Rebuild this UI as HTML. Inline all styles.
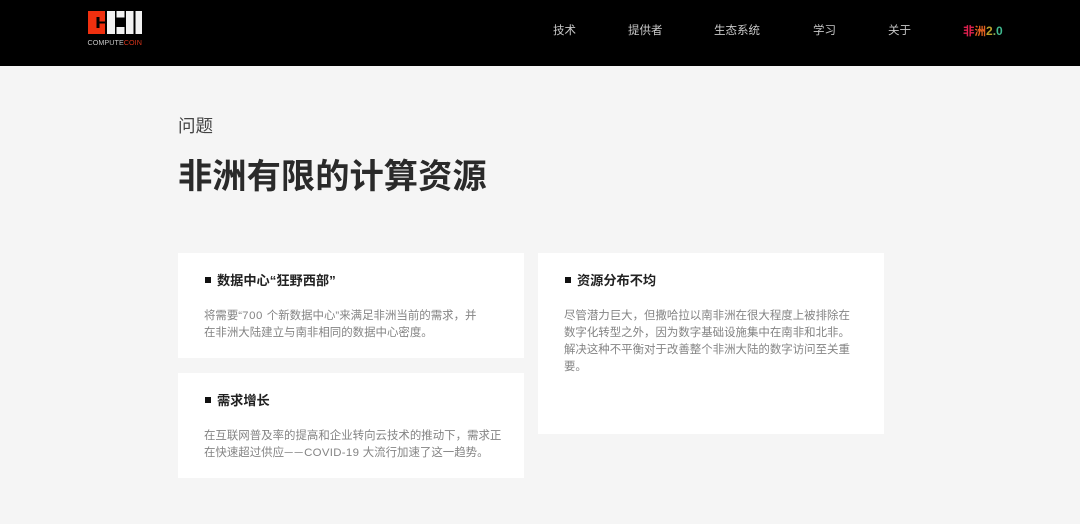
<!DOCTYPE html>
<html lang="zh-CN"><head><meta charset="utf-8"><style>
html,body{margin:0;padding:0}
body{width:1080px;height:524px;position:relative;overflow:hidden;background:#f5f5f5;font-family:"Liberation Sans","Noto Sans CJK SC",sans-serif}
.a{position:absolute;white-space:nowrap}
.hd{left:0;top:0;width:1080px;height:66px;background:#000}
.n{top:22px;font-size:11.5px;line-height:18px;color:#c8c8c8}
.card{position:absolute;background:#fff}
.sq{position:absolute;width:6px;height:6px;background:#111}
.h{font-size:13.2px;font-weight:700;line-height:20px;color:#222}
.p{font-size:11.45px;line-height:17px;color:#848484}
</style></head><body>
<div class="a hd"></div>
<svg class="a" style="left:86px;top:8px" width="60" height="28" viewBox="0 0 60 28">
<path fill="#f0300f" d="M2 3h17v23H2z"/>
<path fill="#000" d="M10.500 9h3v11h-3zM10.500 13.500h8.500v2h-8.500z"/>
<path fill="#f2f2f2" d="M21 3h8v23h-8zM30.500 3h8v6.500h-8zM30.500 19h8v7h-8zM40 3h7.500v23H40zM49.500 3h6.500v23h-6.500z"/>
</svg>
<div class="a" style="left:87.5px;top:38px;font-size:7.2px;line-height:9px;color:#c4c4c4;letter-spacing:.05px">COMPUTE<span style="color:#d8341a">COIN</span></div>

<div class="a n" style="left:553px">技术</div>
<div class="a n" style="left:628px">提供者</div>
<div class="a n" style="left:714px">生态系统</div>
<div class="a n" style="left:813px">学习</div>
<div class="a n" style="left:888px">关于</div>
<div class="a n" style="left:963px;font-weight:700"><span style="color:#e0204f">非</span><span style="color:#e2611f">洲</span><span style="color:#b9a02c;font-size:12px">2</span><span style="color:#7fae5a;font-size:12px">.</span><span style="color:#3fb98f;font-size:12px">0</span></div>

<div class="a" style="left:178px;top:114px;font-size:17.5px;line-height:24px;color:#444">问题</div>
<div class="a" style="left:178px;top:154px;font-size:34.3px;line-height:46px;font-weight:700;color:#2a2a2a">非洲有限的计算资源</div>

<div class="card" style="left:178px;top:253px;width:346px;height:105px"></div>
<div class="card" style="left:178px;top:373px;width:346px;height:105px"></div>
<div class="card" style="left:538px;top:253px;width:346px;height:181px"></div>

<div class="sq" style="left:205px;top:277px"></div>
<div class="a h" style="left:217px;top:271px">数据中心“狂野西部”</div>
<div class="a p" style="left:204px;top:308px">将需要“<span style="letter-spacing:.6px">700 </span>个新数据中心”来满足非洲当前的需求，并<br>在非洲大陆建立与南非相同的数据中心密度。</div>

<div class="sq" style="left:205px;top:397px"></div>
<div class="a h" style="left:217px;top:391px">需求增长</div>
<div class="a p" style="left:204px;top:428px">在互联网普及率的提高和企业转向云技术的推动下，需求正<br>在快速超过供应<span style="font-size:9px;letter-spacing:1px">一一</span><span style="letter-spacing:.3px">COVID-19 </span>大流行加速了这一趋势。</div>

<div class="sq" style="left:565px;top:277px"></div>
<div class="a h" style="left:577px;top:271px">资源分布不均</div>
<div class="a p" style="left:564px;top:308px">尽管潜力巨大，但撒哈拉以南非洲在很大程度上被排除在<br>数字化转型之外，因为数字基础设施集中在南非和北非。<br>解决这种不平衡对于改善整个非洲大陆的数字访问至关重<br>要。</div>
</body></html>
